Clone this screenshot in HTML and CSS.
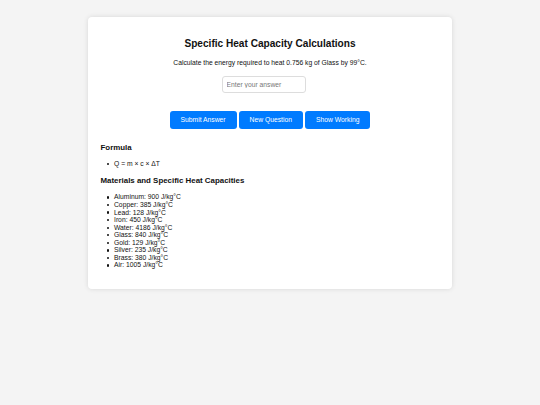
FILE: index.html
```html
<!DOCTYPE html>
<html lang="en">
<head>
    <meta charset="UTF-8">
    <meta name="viewport" content="width=device-width, initial-scale=1.0">
    <title>Specific Heat Capacity Calculations</title>
    <link rel="stylesheet" href="styles.css">
</head>
<body>
    <div class="container">
        <h2 class="title">Specific Heat Capacity Calculations</h2>
        <p class="question">Calculate the energy required to heat 0.756 kg of Glass by 99°C.</p>
        <div class="answer-row">
            <input type="text" class="answer" placeholder="Enter your answer">
        </div>
        <div class="buttons">
            <button class="btn">Submit Answer</button>
            <button class="btn">New Question</button>
            <button class="btn">Show Working</button>
        </div>
        <h3 class="section">Formula</h3>
        <ul class="list formula">
            <li>Q = m × c × ΔT</li>
        </ul>
        <h3 class="section">Materials and Specific Heat Capacities</h3>
        <ul class="list">
            <li>Aluminum: 900 J/kg°C</li>
            <li>Copper: 385 J/kg°C</li>
            <li>Lead: 128 J/kg°C</li>
            <li>Iron: 450 J/kg°C</li>
            <li>Water: 4186 J/kg°C</li>
            <li>Glass: 840 J/kg°C</li>
            <li>Gold: 129 J/kg°C</li>
            <li>Silver: 235 J/kg°C</li>
            <li>Brass: 380 J/kg°C</li>
            <li>Air: 1005 J/kg°C</li>
        </ul>
    </div>
</body>
</html>
```

FILE: styles.css
```css
body {
    background-color: #f4f4f4;
    font-family: 'Liberation Sans', Arial, sans-serif;
    font-size: 6.75px;
    color: #111;
    margin: 0;
    padding: 17px 0;
}
.container {
    width: 339px;
    margin: 0 auto;
    padding: 12.5px 12.5px 20.5px;
    background-color: #fff;
    border-radius: 4px;
    box-shadow: 0 0 5px rgba(0, 0, 0, 0.12);
}
.title {
    font-size: 10.1px;
    text-align: center;
    margin: 8.4px 0;
}
.question {
    text-align: center;
    margin: 10px 0 0;
}
.answer-row {
    display: flex;
    justify-content: center;
    padding: 10px 13px 0 0;
}
.answer {
    width: 84px;
    height: 17px;
    box-sizing: border-box;
    padding: 0 4px;
    border: 1px solid #ddd;
    border-radius: 3px;
    font-family: inherit;
    font-size: 6.75px;
    outline: none;
}
.answer::placeholder {
    color: #777;
}
.buttons {
    display: flex;
    justify-content: center;
    gap: 2px;
    margin: 18px 0 14px;
}
.btn {
    height: 18px;
    padding: 0 11px;
    border: none;
    border-radius: 3px;
    background-color: #007bff;
    color: #fff;
    font-family: inherit;
    font-size: 6.75px;
    cursor: pointer;
}
.section {
    font-size: 7.9px;
    margin: 9px 0 8px;
}
.list {
    margin: 0;
    padding-left: 13.5px;
    list-style: none;
    line-height: 7.55px;
}
.list.formula {
    margin-top: 2px;
}
.list li {
    position: relative;
}
/* small disc bullet, tighter than the default marker */
.list li::before {
    content: "";
    position: absolute;
    left: -7.5px;
    top: 2.9px;
    width: 2.4px;
    height: 2.4px;
    border-radius: 50%;
    background-color: #111;
}
```
